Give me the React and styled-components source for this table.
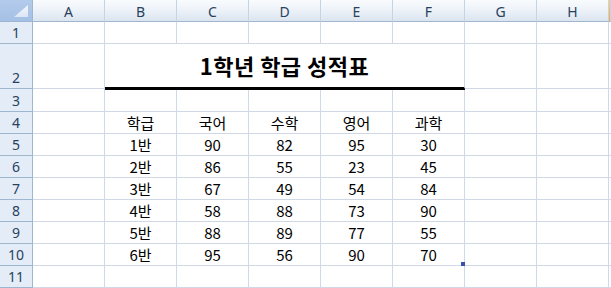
import React from "react";
import styled, { createGlobalStyle } from "styled-components";

const columns = ["A", "B", "C", "D", "E", "F", "G", "H"];

const table = [
    ["학급", "국어", "수학", "영어", "과학"],
    ["1반", "90", "82", "95", "30"],
    ["2반", "86", "55", "23", "45"],
    ["3반", "67", "49", "54", "84"],
    ["4반", "58", "88", "73", "90"],
    ["5반", "88", "89", "77", "55"],
    ["6반", "95", "56", "90", "70"],
];

export default function App() {
    const emptyRow = (n) => (
        <React.Fragment key={n}>
            <RowHead>{n}</RowHead>
            {columns.map((c) => <Cell key={c} />)}
            <Tail />
        </React.Fragment>
    );

    return (
        <>
            <GlobalStyle />
            <Sheet>
                <Corner />
                {columns.map((c) => <ColHead key={c}>{c}</ColHead>)}
                <ColHead $active />

                {emptyRow(1)}

                <RowHead>2</RowHead>
                <Cell />
                <Title>1학년 학급 성적표</Title>
                <Cell />
                <Cell />
                <Tail />

                {emptyRow(3)}

                {table.map((row, i) => (
                    <React.Fragment key={i}>
                        <RowHead>{i + 4}</RowHead>
                        <Cell />
                        {row.map((v, j) => (
                            <Cell key={j}>
                                {v}
                                {i === table.length - 1 && j === row.length - 1 && <FillHandle />}
                            </Cell>
                        ))}
                        <Cell />
                        <Cell />
                        <Tail />
                    </React.Fragment>
                ))}

                {emptyRow(11)}
            </Sheet>
        </>
    );
}

const GlobalStyle = createGlobalStyle`
    html, body {
        margin: 0;
        padding: 0;
        background: #ffffff;
        overflow: hidden;
    }
`;

const Sheet = styled.div`
    display: grid;
    grid-template-columns: 33px repeat(8, 72px) 1fr;
    grid-template-rows: 22px 22px 45px 23px repeat(8, 22px);
    width: 611px;
    height: 288px;
    background: #ffffff;
`;

const Corner = styled.div`
    box-sizing: border-box;
    border-right: 1px solid #9eb6ce;
    border-bottom: 1px solid #9eb6ce;
    background: linear-gradient(#b3cbeb, #a5c0e6);
    position: relative;

    &::after {
        content: "";
        position: absolute;
        right: 4px;
        bottom: 4px;
        width: 14px;
        height: 12px;
        background: linear-gradient(to bottom, #f4f7fb, #dbe6f4);
        clip-path: polygon(100% 0, 100% 100%, 0 100%);
    }
`;

const ColHead = styled.div`
    box-sizing: border-box;
    display: flex;
    align-items: center;
    justify-content: center;
    border-right: 1px solid #c5d3e3;
    border-bottom: 1px solid #9eb6ce;
    background: ${(p) => p.$active
        ? "linear-gradient(#f8cf86, #f1a63c)"
        : "linear-gradient(#f9fbfd 0%, #eef3f9 45%, #dbe4ef 100%)"};
    font: 14px "Noto Sans", "DejaVu Sans", sans-serif;
    color: #27415f;
    padding-top: 1px;
`;

const RowHead = styled.div`
    box-sizing: border-box;
    display: flex;
    align-items: flex-end;
    justify-content: center;
    border-right: 1px solid #9eb6ce;
    border-bottom: 1px solid #9eb6ce;
    background: #e4ecf7;
    font: 14px/20px "Noto Sans", "DejaVu Sans", sans-serif;
    color: #27415f;
`;

const Cell = styled.div`
    box-sizing: border-box;
    position: relative;
    display: flex;
    align-items: flex-end;
    justify-content: center;
    border-right: 1px solid #d0d7e5;
    border-bottom: 1px solid #d0d7e5;
    font: 15px/20px "Noto Sans CJK KR", "Noto Sans", sans-serif;
    color: #000000;
`;

const Tail = styled.div`
    border-bottom: 1px solid #d0d7e5;
`;

const Title = styled.div`
    grid-column: span 5;
    box-sizing: border-box;
    position: relative;
    z-index: 1;
    display: flex;
    align-items: flex-end;
    justify-content: center;
    padding-bottom: 9px;
    border-right: 1px solid #d0d7e5;
    border-bottom: 2px solid #000000;
    box-shadow: 0 1px 0 #000000;
    font: 700 22px/26px "Noto Sans CJK KR", "Noto Sans", sans-serif;
    letter-spacing: 0.5px;
    color: #000000;
`;

const FillHandle = styled.span`
    position: absolute;
    right: -1px;
    bottom: -1px;
    width: 4px;
    height: 4px;
    background: #3a4fb2;
`;
